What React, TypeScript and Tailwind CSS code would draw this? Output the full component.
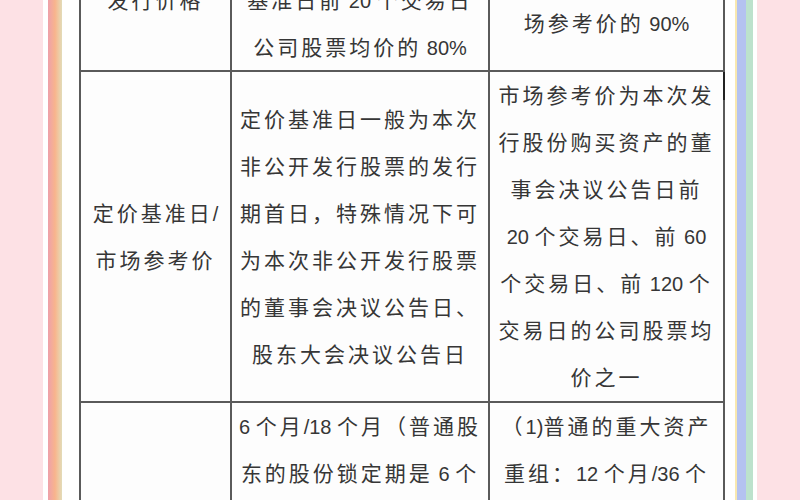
import React from "react";

const font = {
  fontFamily: '"Open Sans", "Noto Sans CJK SC", sans-serif',
};

function Line({ text }: { text: string }) {
  const parts = text.split(/([0-9%/ ()]+)/).filter((p) => p.length > 0);
  return (
    <div className="h-[47px] leading-[47px] whitespace-nowrap text-[21px] tracking-[3px] text-[#363636]">
      {parts.map((p, i) =>
        /^[0-9%/ ()]+$/.test(p) ? (
          <span key={i} className="tracking-[0px] text-[20px]" style={{ fontFamily: '"Liberation Sans", sans-serif' }}>
            {p}
          </span>
        ) : (
          <span key={i}>{p}</span>
        )
      )}
    </div>
  );
}

function Cell({
  lines,
  w,
  top = false,
  last = false,
  children,
}: {
  lines: string[];
  w: string;
  top?: boolean;
  last?: boolean;
  children?: React.ReactNode;
}) {
  return (
    <div
      className={`${w} relative flex flex-col ${top ? "justify-start" : "justify-center"} items-center ${last ? "" : "border-r-2 border-[#5a5a5a]"}`}
    >
      {lines.map((l, i) => (
        <Line key={i} text={l} />
      ))}
      {children}
    </div>
  );
}

export default function App() {
  return (
    <div className="w-[800px] h-[500px] overflow-hidden flex bg-white" style={font}>
      <div className="w-[43px] shrink-0 bg-[#fde1e5]" />
      <div className="w-[5px] shrink-0 bg-white" />
      <div className="w-[14px] shrink-0 bg-gradient-to-r from-[#eea0aa] via-[#f8b48c] to-[#e2dcb8]" />
      <div className="w-[17px] shrink-0 bg-white" />
      <div className="w-[646px] shrink-0 h-[500px] overflow-hidden">
        <div className="mt-[-70px] border-l-2 border-r-2 border-[#5a5a5a] bg-[#fdfdfd]">
          <div className="flex h-[142px] border-b-2 border-[#5a5a5a]">
            <Cell w="w-[151px]" lines={["发行价格"]} />
            <Cell w="w-[258px]" lines={["不低于定价", "基准日前 20 个交易日", "公司股票均价的 80%"]} />
            <Cell w="flex-1" last lines={["不低于市", "场参考价的 90%"]} />
          </div>
          <div className="flex h-[331px] border-b-2 border-[#5a5a5a]">
            <Cell w="w-[151px]" lines={["定价基准日/", "市场参考价"]} />
            <Cell
              w="w-[258px]"
              lines={[
                "定价基准日一般为本次",
                "非公开发行股票的发行",
                "期首日，特殊情况下可",
                "为本次非公开发行股票",
                "的董事会决议公告日、",
                "股东大会决议公告日",
              ]}
            />
            <Cell
              w="flex-1"
              last
              lines={[
                "市场参考价为本次发",
                "行股份购买资产的董",
                "事会决议公告日前",
                "20 个交易日、前 60",
                "个交易日、前 120 个",
                "交易日的公司股票均",
                "价之一",
              ]}
            >
              <div className="absolute right-[-3px] top-0 w-[3px] h-[28px] bg-[#222]" />
            </Cell>
          </div>
          <div className="flex h-[240px]">
            <Cell w="w-[151px]" lines={["锁定期"]} />
            <Cell
              w="w-[258px]"
              top
              lines={["6 个月/18 个月（普通股", "东的股份锁定期是 6 个", "月）"]}
            />
            <Cell
              w="flex-1"
              top
              last
              lines={["（1)普通的重大资产", "重组：12 个月/36 个", "月"]}
            />
          </div>
        </div>
      </div>
      <div className="w-[10px] shrink-0 bg-white" />
      <div className="w-[2px] shrink-0 bg-[#f8e8b0]" />
      <div className="w-[9px] shrink-0 bg-[#b4c2f0]" />
      <div className="w-[7px] shrink-0 bg-[#bce2cc]" />
      <div className="w-[4px] shrink-0 bg-white" />
      <div className="flex-1 bg-[#fde1e5]" />
    </div>
  );
}
